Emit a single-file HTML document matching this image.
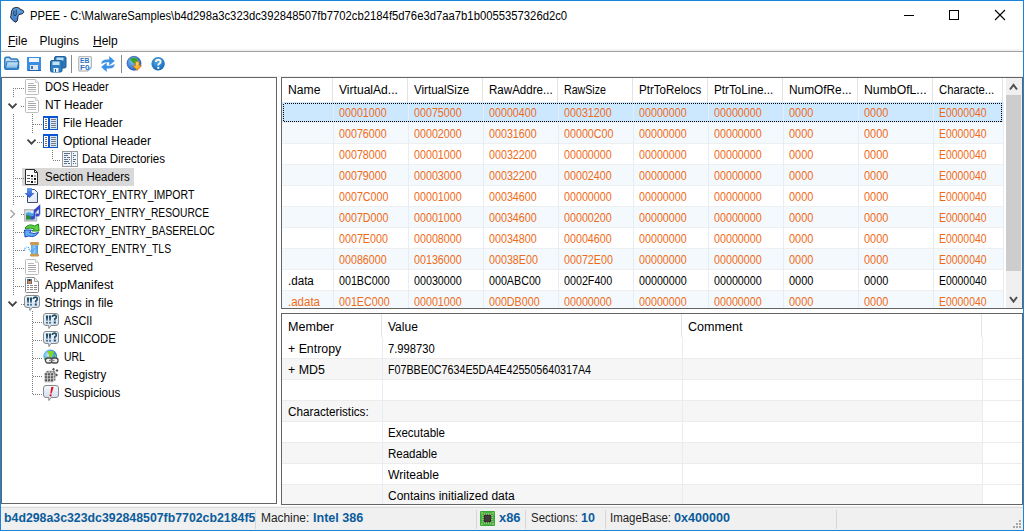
<!DOCTYPE html>
<html><head><meta charset="utf-8">
<style>
*{margin:0;padding:0;box-sizing:border-box}
html,body{width:1024px;height:531px;overflow:hidden;background:#fff}
body{position:relative;font-family:"Liberation Sans",sans-serif;font-size:12px;color:#000}
.a{position:absolute}
.t{position:absolute;white-space:nowrap;line-height:14px;transform-origin:0 0}
#win{position:absolute;left:0;top:0;width:1024px;height:531px;border:1px solid #1884dc;z-index:50}
.box{position:absolute;border:1px solid #646464;background:#fff}
svg{position:absolute;overflow:visible}
</style></head><body>
<div id="win"></div>
<div class="t" style="left:29.70px;top:9px;transform:scaleX(0.9405);">PPEE - C:\MalwareSamples\b4d298a3c323dc392848507fb7702cb2184f5d76e3d7aa7b1b0055357326d2c0</div>
<div class="t" style="left:8px;top:34px;transform-origin:0 0"><u>F</u>ile</div>
<div class="t" style="left:39.60px;top:34px;">Plugins</div>
<div class="t" style="left:93px;top:34px"><u>H</u>elp</div>
<div class="a" style="left:1px;top:49px;width:1022px;height:2px;background:#f3f3f3"></div>
<div class="a" style="left:1px;top:51px;width:1022px;height:1px;background:#a0a0a0"></div>
<div class="a" style="left:1px;top:76px;width:1022px;height:1px;background:#f0f0f0"></div>
<div class="box" style="left:1px;top:77px;width:276px;height:427px"></div>
<div class="box" style="left:281px;top:77px;width:742px;height:232px"></div>
<div class="box" style="left:281px;top:313px;width:742px;height:192px"></div>
<div class="a" style="left:22px;top:168px;width:112px;height:18px;background:#d9d9d9"></div>
<div class="t" style="left:44.50px;top:80px;transform:scaleX(0.9275);">DOS Header</div>
<div class="t" style="left:44.50px;top:98px;transform:scaleX(0.9931);">NT Header</div>
<div class="t" style="left:63.40px;top:116px;transform:scaleX(0.9613);">File Header</div>
<div class="t" style="left:63.40px;top:134px;transform:scaleX(1.0069);">Optional Header</div>
<div class="t" style="left:82.40px;top:152px;transform:scaleX(0.9651);">Data Directories</div>
<div class="t" style="left:44.50px;top:170px;transform:scaleX(0.9551);">Section Headers</div>
<div class="t" style="left:44.50px;top:188px;transform:scaleX(0.8760);">DIRECTORY_ENTRY_IMPORT</div>
<div class="t" style="left:44.50px;top:206px;transform:scaleX(0.8542);">DIRECTORY_ENTRY_RESOURCE</div>
<div class="t" style="left:44.50px;top:224px;transform:scaleX(0.8601);">DIRECTORY_ENTRY_BASERELOC</div>
<div class="t" style="left:44.50px;top:242px;transform:scaleX(0.8630);">DIRECTORY_ENTRY_TLS</div>
<div class="t" style="left:44.50px;top:260px;transform:scaleX(0.9333);">Reserved</div>
<div class="t" style="left:44.50px;top:278px;transform:scaleX(1.0269);">AppManifest</div>
<div class="t" style="left:44.50px;top:296px;">Strings in file</div>
<div class="t" style="left:63.60px;top:314px;transform:scaleX(0.9032);">ASCII</div>
<div class="t" style="left:63.60px;top:332px;transform:scaleX(0.9327);">UNICODE</div>
<div class="t" style="left:63.60px;top:350px;transform:scaleX(0.8667);">URL</div>
<div class="t" style="left:63.60px;top:368px;transform:scaleX(0.9591);">Registry</div>
<div class="t" style="left:63.60px;top:386px;transform:scaleX(0.9724);">Suspicious</div>
<div class="t" style="left:287.50px;top:83px;transform:scaleX(1.0125);">Name</div>
<div class="t" style="left:338.50px;top:83px;transform:scaleX(1.0069);">VirtualAd...</div>
<div class="a" style="left:332px;top:78px;width:1px;height:24px;background:#e3e3e3"></div>
<div class="t" style="left:413.50px;top:83px;transform:scaleX(0.9649);">VirtualSize</div>
<div class="a" style="left:407px;top:78px;width:1px;height:24px;background:#e3e3e3"></div>
<div class="t" style="left:488.50px;top:83px;transform:scaleX(0.9636);">RawAddre...</div>
<div class="a" style="left:482px;top:78px;width:1px;height:24px;background:#e3e3e3"></div>
<div class="t" style="left:563.50px;top:83px;transform:scaleX(0.8854);">RawSize</div>
<div class="a" style="left:557px;top:78px;width:1px;height:24px;background:#e3e3e3"></div>
<div class="t" style="left:638.50px;top:83px;transform:scaleX(0.9631);">PtrToRelocs</div>
<div class="a" style="left:632px;top:78px;width:1px;height:24px;background:#e3e3e3"></div>
<div class="t" style="left:713.50px;top:83px;transform:scaleX(0.9754);">PtrToLine...</div>
<div class="a" style="left:707px;top:78px;width:1px;height:24px;background:#e3e3e3"></div>
<div class="t" style="left:788.50px;top:83px;transform:scaleX(0.9873);">NumOfRe...</div>
<div class="a" style="left:782px;top:78px;width:1px;height:24px;background:#e3e3e3"></div>
<div class="t" style="left:863.50px;top:83px;transform:scaleX(1.0197);">NumbOfL...</div>
<div class="a" style="left:857px;top:78px;width:1px;height:24px;background:#e3e3e3"></div>
<div class="t" style="left:938.50px;top:83px;transform:scaleX(0.9407);">Characte...</div>
<div class="a" style="left:932px;top:78px;width:1px;height:24px;background:#e3e3e3"></div>
<div class="a" style="left:1002px;top:78px;width:1px;height:24px;background:#e3e3e3"></div>
<div class="a" style="left:282px;top:102px;width:723px;height:206px;overflow:hidden">
<div class="a" style="left:0;top:0px;width:721px;height:21px;background:#cce8ff"></div>
<div class="a" style="left:0;top:20px;width:721px;height:1px;background:#edeff1"></div>
<div class="a" style="left:0;top:21px;width:721px;height:21px;background:#f3f9fd"></div>
<div class="a" style="left:0;top:41px;width:721px;height:1px;background:#edeff1"></div>
<div class="a" style="left:0;top:42px;width:721px;height:21px;background:#fff"></div>
<div class="a" style="left:0;top:62px;width:721px;height:1px;background:#edeff1"></div>
<div class="a" style="left:0;top:63px;width:721px;height:21px;background:#f3f9fd"></div>
<div class="a" style="left:0;top:83px;width:721px;height:1px;background:#edeff1"></div>
<div class="a" style="left:0;top:84px;width:721px;height:21px;background:#fff"></div>
<div class="a" style="left:0;top:104px;width:721px;height:1px;background:#edeff1"></div>
<div class="a" style="left:0;top:105px;width:721px;height:21px;background:#f3f9fd"></div>
<div class="a" style="left:0;top:125px;width:721px;height:1px;background:#edeff1"></div>
<div class="a" style="left:0;top:126px;width:721px;height:21px;background:#fff"></div>
<div class="a" style="left:0;top:146px;width:721px;height:1px;background:#edeff1"></div>
<div class="a" style="left:0;top:147px;width:721px;height:21px;background:#f3f9fd"></div>
<div class="a" style="left:0;top:167px;width:721px;height:1px;background:#edeff1"></div>
<div class="a" style="left:0;top:168px;width:721px;height:21px;background:#fff"></div>
<div class="a" style="left:0;top:188px;width:721px;height:1px;background:#edeff1"></div>
<div class="a" style="left:0;top:189px;width:721px;height:21px;background:#f3f9fd"></div>
<div class="a" style="left:0;top:209px;width:721px;height:1px;background:#edeff1"></div>
<div class="a" style="left:51px;top:0;width:1px;height:206px;background:#e6edf5"></div>
<div class="a" style="left:126px;top:0;width:1px;height:206px;background:#e6edf5"></div>
<div class="a" style="left:201px;top:0;width:1px;height:206px;background:#e6edf5"></div>
<div class="a" style="left:276px;top:0;width:1px;height:206px;background:#e6edf5"></div>
<div class="a" style="left:351px;top:0;width:1px;height:206px;background:#e6edf5"></div>
<div class="a" style="left:426px;top:0;width:1px;height:206px;background:#e6edf5"></div>
<div class="a" style="left:501px;top:0;width:1px;height:206px;background:#e6edf5"></div>
<div class="a" style="left:576px;top:0;width:1px;height:206px;background:#e6edf5"></div>
<div class="a" style="left:651px;top:0;width:1px;height:206px;background:#e6edf5"></div>
<div class="a" style="left:721px;top:0;width:1px;height:206px;background:#e6edf5"></div>
</div>
<div class="t" style="left:338.50px;top:106px;transform:scaleX(0.8935);color:#f06a16;">00001000</div>
<div class="t" style="left:413.50px;top:106px;transform:scaleX(0.8935);color:#f06a16;">00075000</div>
<div class="t" style="left:488.50px;top:106px;transform:scaleX(0.8935);color:#f06a16;">00000400</div>
<div class="t" style="left:563.50px;top:106px;transform:scaleX(0.8935);color:#f06a16;">00031200</div>
<div class="t" style="left:638.50px;top:106px;transform:scaleX(0.8935);color:#f06a16;">00000000</div>
<div class="t" style="left:713.50px;top:106px;transform:scaleX(0.8935);color:#f06a16;">00000000</div>
<div class="t" style="left:788.50px;top:106px;transform:scaleX(0.9120);color:#f06a16;">0000</div>
<div class="t" style="left:863.50px;top:106px;transform:scaleX(0.9120);color:#f06a16;">0000</div>
<div class="t" style="left:938.50px;top:106px;transform:scaleX(0.8682);color:#f06a16;">E0000040</div>
<div class="t" style="left:338.50px;top:127px;transform:scaleX(0.8935);color:#f06a16;">00076000</div>
<div class="t" style="left:413.50px;top:127px;transform:scaleX(0.8935);color:#f06a16;">00002000</div>
<div class="t" style="left:488.50px;top:127px;transform:scaleX(0.8935);color:#f06a16;">00031600</div>
<div class="t" style="left:563.50px;top:127px;transform:scaleX(0.8929);color:#f06a16;">00000C00</div>
<div class="t" style="left:638.50px;top:127px;transform:scaleX(0.8935);color:#f06a16;">00000000</div>
<div class="t" style="left:713.50px;top:127px;transform:scaleX(0.8935);color:#f06a16;">00000000</div>
<div class="t" style="left:788.50px;top:127px;transform:scaleX(0.9120);color:#f06a16;">0000</div>
<div class="t" style="left:863.50px;top:127px;transform:scaleX(0.9120);color:#f06a16;">0000</div>
<div class="t" style="left:938.50px;top:127px;transform:scaleX(0.8682);color:#f06a16;">E0000040</div>
<div class="t" style="left:338.50px;top:148px;transform:scaleX(0.8935);color:#f06a16;">00078000</div>
<div class="t" style="left:413.50px;top:148px;transform:scaleX(0.8935);color:#f06a16;">00001000</div>
<div class="t" style="left:488.50px;top:148px;transform:scaleX(0.8935);color:#f06a16;">00032200</div>
<div class="t" style="left:563.50px;top:148px;transform:scaleX(0.8935);color:#f06a16;">00000000</div>
<div class="t" style="left:638.50px;top:148px;transform:scaleX(0.8935);color:#f06a16;">00000000</div>
<div class="t" style="left:713.50px;top:148px;transform:scaleX(0.8935);color:#f06a16;">00000000</div>
<div class="t" style="left:788.50px;top:148px;transform:scaleX(0.9120);color:#f06a16;">0000</div>
<div class="t" style="left:863.50px;top:148px;transform:scaleX(0.9120);color:#f06a16;">0000</div>
<div class="t" style="left:938.50px;top:148px;transform:scaleX(0.8682);color:#f06a16;">E0000040</div>
<div class="t" style="left:338.50px;top:169px;transform:scaleX(0.8935);color:#f06a16;">00079000</div>
<div class="t" style="left:413.50px;top:169px;transform:scaleX(0.8935);color:#f06a16;">00003000</div>
<div class="t" style="left:488.50px;top:169px;transform:scaleX(0.8935);color:#f06a16;">00032200</div>
<div class="t" style="left:563.50px;top:169px;transform:scaleX(0.8935);color:#f06a16;">00002400</div>
<div class="t" style="left:638.50px;top:169px;transform:scaleX(0.8935);color:#f06a16;">00000000</div>
<div class="t" style="left:713.50px;top:169px;transform:scaleX(0.8935);color:#f06a16;">00000000</div>
<div class="t" style="left:788.50px;top:169px;transform:scaleX(0.9120);color:#f06a16;">0000</div>
<div class="t" style="left:863.50px;top:169px;transform:scaleX(0.9120);color:#f06a16;">0000</div>
<div class="t" style="left:938.50px;top:169px;transform:scaleX(0.8682);color:#f06a16;">E0000040</div>
<div class="t" style="left:338.50px;top:190px;transform:scaleX(0.8929);color:#f06a16;">0007C000</div>
<div class="t" style="left:413.50px;top:190px;transform:scaleX(0.8935);color:#f06a16;">00001000</div>
<div class="t" style="left:488.50px;top:190px;transform:scaleX(0.8935);color:#f06a16;">00034600</div>
<div class="t" style="left:563.50px;top:190px;transform:scaleX(0.8935);color:#f06a16;">00000000</div>
<div class="t" style="left:638.50px;top:190px;transform:scaleX(0.8935);color:#f06a16;">00000000</div>
<div class="t" style="left:713.50px;top:190px;transform:scaleX(0.8935);color:#f06a16;">00000000</div>
<div class="t" style="left:788.50px;top:190px;transform:scaleX(0.9120);color:#f06a16;">0000</div>
<div class="t" style="left:863.50px;top:190px;transform:scaleX(0.9120);color:#f06a16;">0000</div>
<div class="t" style="left:938.50px;top:190px;transform:scaleX(0.8682);color:#f06a16;">E0000040</div>
<div class="t" style="left:338.50px;top:211px;transform:scaleX(0.8929);color:#f06a16;">0007D000</div>
<div class="t" style="left:413.50px;top:211px;transform:scaleX(0.8935);color:#f06a16;">00001000</div>
<div class="t" style="left:488.50px;top:211px;transform:scaleX(0.8935);color:#f06a16;">00034600</div>
<div class="t" style="left:563.50px;top:211px;transform:scaleX(0.8935);color:#f06a16;">00000200</div>
<div class="t" style="left:638.50px;top:211px;transform:scaleX(0.8935);color:#f06a16;">00000000</div>
<div class="t" style="left:713.50px;top:211px;transform:scaleX(0.8935);color:#f06a16;">00000000</div>
<div class="t" style="left:788.50px;top:211px;transform:scaleX(0.9120);color:#f06a16;">0000</div>
<div class="t" style="left:863.50px;top:211px;transform:scaleX(0.9120);color:#f06a16;">0000</div>
<div class="t" style="left:938.50px;top:211px;transform:scaleX(0.8682);color:#f06a16;">E0000040</div>
<div class="t" style="left:338.50px;top:232px;transform:scaleX(0.8932);color:#f06a16;">0007E000</div>
<div class="t" style="left:413.50px;top:232px;transform:scaleX(0.8935);color:#f06a16;">00008000</div>
<div class="t" style="left:488.50px;top:232px;transform:scaleX(0.8935);color:#f06a16;">00034800</div>
<div class="t" style="left:563.50px;top:232px;transform:scaleX(0.8935);color:#f06a16;">00004600</div>
<div class="t" style="left:638.50px;top:232px;transform:scaleX(0.8935);color:#f06a16;">00000000</div>
<div class="t" style="left:713.50px;top:232px;transform:scaleX(0.8935);color:#f06a16;">00000000</div>
<div class="t" style="left:788.50px;top:232px;transform:scaleX(0.9120);color:#f06a16;">0000</div>
<div class="t" style="left:863.50px;top:232px;transform:scaleX(0.9120);color:#f06a16;">0000</div>
<div class="t" style="left:938.50px;top:232px;transform:scaleX(0.8682);color:#f06a16;">E0000040</div>
<div class="t" style="left:338.50px;top:253px;transform:scaleX(0.8935);color:#f06a16;">00086000</div>
<div class="t" style="left:413.50px;top:253px;transform:scaleX(0.8935);color:#f06a16;">00136000</div>
<div class="t" style="left:488.50px;top:253px;transform:scaleX(0.8932);color:#f06a16;">00038E00</div>
<div class="t" style="left:563.50px;top:253px;transform:scaleX(0.8932);color:#f06a16;">00072E00</div>
<div class="t" style="left:638.50px;top:253px;transform:scaleX(0.8935);color:#f06a16;">00000000</div>
<div class="t" style="left:713.50px;top:253px;transform:scaleX(0.8935);color:#f06a16;">00000000</div>
<div class="t" style="left:788.50px;top:253px;transform:scaleX(0.9120);color:#f06a16;">0000</div>
<div class="t" style="left:863.50px;top:253px;transform:scaleX(0.9120);color:#f06a16;">0000</div>
<div class="t" style="left:938.50px;top:253px;transform:scaleX(0.8682);color:#f06a16;">E0000040</div>
<div class="t" style="left:287.50px;top:274px;transform:scaleX(0.9670);color:#000;">.data</div>
<div class="t" style="left:338.50px;top:274px;transform:scaleX(0.8925);color:#000;">001BC000</div>
<div class="t" style="left:413.50px;top:274px;transform:scaleX(0.8935);color:#000;">00030000</div>
<div class="t" style="left:488.50px;top:274px;transform:scaleX(0.8922);color:#000;">000ABC00</div>
<div class="t" style="left:563.50px;top:274px;transform:scaleX(0.8935);color:#000;">0002F400</div>
<div class="t" style="left:638.50px;top:274px;transform:scaleX(0.8935);color:#000;">00000000</div>
<div class="t" style="left:713.50px;top:274px;transform:scaleX(0.8935);color:#000;">00000000</div>
<div class="t" style="left:788.50px;top:274px;transform:scaleX(0.9120);color:#000;">0000</div>
<div class="t" style="left:863.50px;top:274px;transform:scaleX(0.9120);color:#000;">0000</div>
<div class="t" style="left:938.50px;top:274px;transform:scaleX(0.8682);color:#000;">E0000040</div>
<div class="t" style="left:287.50px;top:295px;transform:scaleX(0.9594);color:#f06a16;">.adata</div>
<div class="t" style="left:338.50px;top:295px;transform:scaleX(0.8925);color:#f06a16;">001EC000</div>
<div class="t" style="left:413.50px;top:295px;transform:scaleX(0.8935);color:#f06a16;">00001000</div>
<div class="t" style="left:488.50px;top:295px;transform:scaleX(0.8925);color:#f06a16;">000DB000</div>
<div class="t" style="left:563.50px;top:295px;transform:scaleX(0.8935);color:#f06a16;">00000000</div>
<div class="t" style="left:638.50px;top:295px;transform:scaleX(0.8935);color:#f06a16;">00000000</div>
<div class="t" style="left:713.50px;top:295px;transform:scaleX(0.8935);color:#f06a16;">00000000</div>
<div class="t" style="left:788.50px;top:295px;transform:scaleX(0.9120);color:#f06a16;">0000</div>
<div class="t" style="left:863.50px;top:295px;transform:scaleX(0.9120);color:#f06a16;">0000</div>
<div class="t" style="left:938.50px;top:295px;transform:scaleX(0.8682);color:#f06a16;">E0000040</div>
<div class="a" style="left:282px;top:314px;width:740px;height:190px;overflow:hidden">
<div class="a" style="left:0;top:23px;width:700px;height:21px;background:#fff"></div>
<div class="a" style="left:0;top:44px;width:700px;height:21px;background:#f6f6f6"></div>
<div class="a" style="left:0;top:44px;width:740px;height:1px;background:#ececec"></div>
<div class="a" style="left:0;top:65px;width:700px;height:21px;background:#fff"></div>
<div class="a" style="left:0;top:65px;width:740px;height:1px;background:#ececec"></div>
<div class="a" style="left:0;top:86px;width:700px;height:21px;background:#f6f6f6"></div>
<div class="a" style="left:0;top:86px;width:740px;height:1px;background:#ececec"></div>
<div class="a" style="left:0;top:107px;width:700px;height:21px;background:#fff"></div>
<div class="a" style="left:0;top:107px;width:740px;height:1px;background:#ececec"></div>
<div class="a" style="left:0;top:128px;width:700px;height:21px;background:#f6f6f6"></div>
<div class="a" style="left:0;top:128px;width:740px;height:1px;background:#ececec"></div>
<div class="a" style="left:0;top:149px;width:700px;height:21px;background:#fff"></div>
<div class="a" style="left:0;top:149px;width:740px;height:1px;background:#ececec"></div>
<div class="a" style="left:0;top:170px;width:700px;height:21px;background:#f6f6f6"></div>
<div class="a" style="left:0;top:170px;width:740px;height:1px;background:#ececec"></div>
<div class="a" style="left:0;top:191px;width:700px;height:21px;background:#fff"></div>
<div class="a" style="left:0;top:191px;width:740px;height:1px;background:#ececec"></div>
<div class="a" style="left:99px;top:0;width:1px;height:23px;background:#e3e3e3"></div>
<div class="a" style="left:100px;top:23px;width:1px;height:170px;background:#e6edf5"></div>
<div class="a" style="left:399px;top:0;width:1px;height:23px;background:#e3e3e3"></div>
<div class="a" style="left:400px;top:23px;width:1px;height:170px;background:#e6edf5"></div>
<div class="a" style="left:699px;top:0;width:1px;height:23px;background:#e3e3e3"></div>
<div class="a" style="left:700px;top:23px;width:1px;height:170px;background:#e6edf5"></div>
</div>
<div class="t" style="left:287.50px;top:320px;transform:scaleX(1.0455);">Member</div>
<div class="t" style="left:388.00px;top:320px;">Value</div>
<div class="t" style="left:688.00px;top:320px;transform:scaleX(1.0472);">Comment</div>
<div class="t" style="left:288.00px;top:342px;transform:scaleX(1.0288);">+ Entropy</div>
<div class="t" style="left:388.00px;top:342px;transform:scaleX(0.9340);">7.998730</div>
<div class="t" style="left:288.00px;top:363px;transform:scaleX(1.0361);">+ MD5</div>
<div class="t" style="left:388.00px;top:363px;transform:scaleX(0.8925);">F07BBE0C7634E5DA4E425505640317A4</div>
<div class="t" style="left:288.00px;top:405px;transform:scaleX(0.9759);">Characteristics:</div>
<div class="t" style="left:388.00px;top:426px;transform:scaleX(0.9600);">Executable</div>
<div class="t" style="left:388.00px;top:447px;transform:scaleX(0.9577);">Readable</div>
<div class="t" style="left:388.00px;top:468px;transform:scaleX(1.0078);">Writeable</div>
<div class="t" style="left:388.00px;top:489px;">Contains initialized data</div>
<div class="a" style="left:1px;top:506px;width:1022px;height:1px;background:#f4f4f4"></div>
<div class="a" style="left:1px;top:507px;width:1022px;height:23px;background:#f0f0f0;border-top:1px solid #dcdcdc"></div>
<div class="t" style="left:4.20px;top:511px;transform:scaleX(1.0265);color:#0b5c9c;font-weight:bold;">b4d298a3c323dc392848507fb7702cb2184f5</div>
<div class="t" style="left:260.70px;top:511px;transform:scaleX(0.9918);color:#1e1e1e;">Machine:</div>
<div class="t" style="left:312.70px;top:511px;transform:scaleX(1.0479);color:#0b5c9c;font-weight:bold;">Intel 386</div>
<div class="t" style="left:498.50px;top:511px;transform:scaleX(1.0750);color:#0b5c9c;font-weight:bold;">x86</div>
<div class="t" style="left:530.50px;top:511px;transform:scaleX(0.9531);color:#1e1e1e;">Sections:</div>
<div class="t" style="left:581.10px;top:511px;transform:scaleX(1.0357);color:#0b5c9c;font-weight:bold;">10</div>
<div class="t" style="left:610.40px;top:511px;transform:scaleX(0.9531);color:#1e1e1e;">ImageBase:</div>
<div class="t" style="left:674.00px;top:511px;transform:scaleX(1.0463);color:#0b5c9c;font-weight:bold;">0x400000</div>
<div class="a" style="left:255px;top:510px;width:1px;height:19px;background:#d7d7d7"></div>
<div class="a" style="left:476px;top:510px;width:1px;height:19px;background:#d7d7d7"></div>
<div class="a" style="left:525px;top:510px;width:1px;height:19px;background:#d7d7d7"></div>
<div class="a" style="left:605px;top:510px;width:1px;height:19px;background:#d7d7d7"></div>
<div class="a" style="left:836px;top:510px;width:1px;height:19px;background:#d7d7d7"></div>
<svg width="1024" height="531" style="left:0;top:0;z-index:10"><g>
<defs><linearGradient id="dg" x1="0" y1="0" x2="0" y2="1"><stop offset="0" stop-color="#6aa4e4"/><stop offset="1" stop-color="#3a78c8"/></linearGradient></defs>
<path d="M13 8.3 Q16 6.8 19.3 8 Q20 8.7 20.2 9.5 L22.5 10 Q24 11 23.6 12.5 Q23 13.8 21.5 14 L18.8 14.6 Q17.8 15.5 17.8 18 Q17.8 21 15.8 22.3 Q12.5 21 10.5 17.5 Q10.2 16.5 11 15.5 Q11 10.5 13 8.3 Z" fill="url(#dg)" stroke="#101820" stroke-width="0.9"/>
<path d="M13.8 10.5 V14.5 Q14 15.8 15.3 15.6 Q16.2 15.4 16.2 14.5 V9.5" fill="none" stroke="#15202e" stroke-width="0.8"/>
</g><rect x="904" y="15" width="10" height="1" fill="#000" shape-rendering="crispEdges"/><rect x="949.5" y="10.5" width="9" height="9" fill="none" stroke="#000"/><path d="M995 10 L1005 20 M1005 10 L995 20" stroke="#000" stroke-width="1.1"/><g transform="translate(4,56.5)">
<defs><linearGradient id="fg" x1="0" y1="0" x2="0" y2="1"><stop offset="0" stop-color="#cfe6f8"/><stop offset="1" stop-color="#83bde8"/></linearGradient></defs>
<path d="M0.8 2.5 Q0.8 0.8 2.5 0.8 H5.5 L7 2.5 H12.5 Q13.5 2.5 13.8 4 L14.5 5 V11.5 Q14.5 12.7 13 12.7 H2 Q0.8 12.7 0.8 11.5 Z" fill="#bcdaf2" stroke="#2c78bd" stroke-width="1.5"/>
<path d="M3 5.2 H13.5 Q14.8 5.2 14.5 6.5 L13.3 11.7 H1.5 Z" fill="url(#fg)" stroke="#2c78bd" stroke-width="1.1"/>
</g><g transform="translate(27,57)" shape-rendering="crispEdges">
<rect x="0" y="0" width="14" height="14" fill="#3b8ee3"/>
<rect x="1" y="13" width="13" height="1" fill="#1f60b8"/>
<rect x="2" y="1" width="10" height="4" fill="#f2f7fd"/>
<rect x="3" y="8" width="8" height="5" fill="#e6e6e6"/>
<rect x="4" y="9" width="2" height="3" fill="#2a7ad8"/>
</g><g transform="translate(50,56)">
<rect x="4.5" y="0.5" width="11.5" height="11.5" rx="1.5" fill="#2c77b8" stroke="#1d5e98"/>
<rect x="6.5" y="1.5" width="7" height="3" fill="#b9dcf3"/>
<rect x="0.5" y="4.5" width="11.5" height="11.5" rx="1.5" fill="#2f7fc2" stroke="#1d5e98"/>
<rect x="2.5" y="5.5" width="7" height="3.5" fill="#c6e2f6"/>
<rect x="3.5" y="12" width="5" height="4" fill="#e8f2fa"/>
<rect x="5" y="13" width="1" height="3" fill="#1d5e98"/>
</g><rect x="71" y="55" width="1" height="18" fill="#8a8a8a" shape-rendering="crispEdges"/><g transform="translate(78,56)">
<path d="M1 0.8 H12.5 Q13.3 0.8 13.3 1.6 V11 L9.5 15 H1.6 Q0.8 15 0.8 14.2 V1.6 Q0.8 0.8 1.6 0.8 Z" fill="#fff" stroke="#a8a8a8" stroke-width="1.1"/>
<path d="M13 11.5 L10 14.5" stroke="#7ab8ea" stroke-width="1.2"/>
<text x="2" y="7.3" font-family="Liberation Sans" font-weight="bold" font-size="7.6" fill="#2d74c0" textLength="9.5" lengthAdjust="spacingAndGlyphs">EB</text>
<text x="2" y="13.6" font-family="Liberation Sans" font-weight="bold" font-size="7.6" fill="#2d74c0" textLength="9.5" lengthAdjust="spacingAndGlyphs">F0</text>
</g><g transform="translate(100.7,56)" fill="#3b91e5">
<path d="M0.5 8 Q1 3.5 6 3.5 H8.5 V0 L14 5 L8.5 9.5 V6.3 H6 Q3 6.3 0.5 8 Z"/>
<path d="M14 8 Q13.5 12.5 8.5 12.5 H6 V16 L0.5 11 L6 6.5 V9.7 H8.5 Q11.5 9.7 14 8 Z"/>
</g><rect x="121" y="55" width="1" height="18" fill="#8a8a8a" shape-rendering="crispEdges"/><g transform="translate(127,56.3)">
<defs><radialGradient id="gg" cx="0.4" cy="0.35" r="0.75"><stop offset="0" stop-color="#7cc7f5"/><stop offset="1" stop-color="#1d56b8"/></radialGradient>
<linearGradient id="ga" x1="0" y1="0" x2="0" y2="1"><stop offset="0" stop-color="#ffe24a"/><stop offset="1" stop-color="#f59a10"/></linearGradient></defs>
<circle cx="7" cy="7" r="7" fill="url(#gg)" stroke="#2a3fa0" stroke-width="0.6"/>
<path d="M3 2.5 Q7 0.5 10.5 2.5 Q11.5 5 9 6.5 Q7 8 5.5 6 Q4 4.5 3 2.5 Z" fill="#3aa52a"/>
<path d="M8.5 5.5 H12 V9.5 H14.5 L10.2 14 L6 9.5 H8.5 Z" fill="url(#ga)" stroke="#d8761a" stroke-width="0.8"/>
</g><g transform="translate(151.3,57)">
<defs><radialGradient id="hg" cx="0.45" cy="0.35" r="0.7"><stop offset="0" stop-color="#4fb0ee"/><stop offset="1" stop-color="#0e5fae"/></radialGradient></defs>
<circle cx="6.8" cy="6.8" r="6.7" fill="url(#hg)"/>
<path d="M4.6 5.1 Q4.6 2.8 7 2.8 Q9.3 2.8 9.3 4.8 Q9.3 6.2 7.6 7 Q7 7.4 7 8.6" fill="none" stroke="#fff6e8" stroke-width="1.9"/>
<circle cx="7" cy="10.9" r="1.15" fill="#fff6e8"/>
</g><line x1="13.5" y1="88" x2="13.5" y2="97" stroke="#7a7a7a" stroke-dasharray="1 1" shape-rendering="crispEdges"/><line x1="13.5" y1="114" x2="13.5" y2="205" stroke="#7a7a7a" stroke-dasharray="1 1" shape-rendering="crispEdges"/><line x1="13.5" y1="222" x2="13.5" y2="295" stroke="#7a7a7a" stroke-dasharray="1 1" shape-rendering="crispEdges"/><line x1="13" y1="88.5" x2="24" y2="88.5" stroke="#7a7a7a" stroke-dasharray="1 1" shape-rendering="crispEdges"/><line x1="21" y1="106.5" x2="24" y2="106.5" stroke="#7a7a7a" stroke-dasharray="1 1" shape-rendering="crispEdges"/><line x1="32.5" y1="114" x2="32.5" y2="134" stroke="#7a7a7a" stroke-dasharray="1 1" shape-rendering="crispEdges"/><line x1="33" y1="124.5" x2="42" y2="124.5" stroke="#7a7a7a" stroke-dasharray="1 1" shape-rendering="crispEdges"/><line x1="37" y1="142.5" x2="42" y2="142.5" stroke="#7a7a7a" stroke-dasharray="1 1" shape-rendering="crispEdges"/><line x1="52.5" y1="150" x2="52.5" y2="160" stroke="#7a7a7a" stroke-dasharray="1 1" shape-rendering="crispEdges"/><line x1="53" y1="160.5" x2="61" y2="160.5" stroke="#7a7a7a" stroke-dasharray="1 1" shape-rendering="crispEdges"/><line x1="13" y1="178.5" x2="24" y2="178.5" stroke="#7a7a7a" stroke-dasharray="1 1" shape-rendering="crispEdges"/><line x1="13" y1="196.5" x2="24" y2="196.5" stroke="#7a7a7a" stroke-dasharray="1 1" shape-rendering="crispEdges"/><line x1="13" y1="232.5" x2="24" y2="232.5" stroke="#7a7a7a" stroke-dasharray="1 1" shape-rendering="crispEdges"/><line x1="13" y1="250.5" x2="24" y2="250.5" stroke="#7a7a7a" stroke-dasharray="1 1" shape-rendering="crispEdges"/><line x1="13" y1="268.5" x2="24" y2="268.5" stroke="#7a7a7a" stroke-dasharray="1 1" shape-rendering="crispEdges"/><line x1="13" y1="286.5" x2="24" y2="286.5" stroke="#7a7a7a" stroke-dasharray="1 1" shape-rendering="crispEdges"/><line x1="21" y1="214.5" x2="24" y2="214.5" stroke="#7a7a7a" stroke-dasharray="1 1" shape-rendering="crispEdges"/><line x1="21" y1="304.5" x2="24" y2="304.5" stroke="#7a7a7a" stroke-dasharray="1 1" shape-rendering="crispEdges"/><line x1="32.5" y1="311" x2="32.5" y2="394" stroke="#7a7a7a" stroke-dasharray="1 1" shape-rendering="crispEdges"/><line x1="33" y1="322.5" x2="42" y2="322.5" stroke="#7a7a7a" stroke-dasharray="1 1" shape-rendering="crispEdges"/><line x1="33" y1="340.5" x2="42" y2="340.5" stroke="#7a7a7a" stroke-dasharray="1 1" shape-rendering="crispEdges"/><line x1="33" y1="358.5" x2="42" y2="358.5" stroke="#7a7a7a" stroke-dasharray="1 1" shape-rendering="crispEdges"/><line x1="33" y1="376.5" x2="42" y2="376.5" stroke="#7a7a7a" stroke-dasharray="1 1" shape-rendering="crispEdges"/><line x1="33" y1="394.5" x2="42" y2="394.5" stroke="#7a7a7a" stroke-dasharray="1 1" shape-rendering="crispEdges"/><path d="M8.5 103.7 L12.5 107.7 L16.5 103.7" fill="none" stroke="#424242" stroke-width="1.8"/><path d="M27.5 139.7 L31.5 143.7 L35.5 139.7" fill="none" stroke="#424242" stroke-width="1.8"/><path d="M8.5 301.7 L12.5 305.7 L16.5 301.7" fill="none" stroke="#424242" stroke-width="1.8"/><path d="M10.5 210 L14.5 214 L10.5 218" fill="none" stroke="#a8a8a8" stroke-width="1.5"/><g transform="translate(25,79)">
<path d="M0.5 1.5 Q0.5 0.5 1.5 0.5 H10.5 L13.5 3.5 V14.5 Q13.5 15.5 12.5 15.5 H1.5 Q0.5 15.5 0.5 14.5 Z" fill="#fff" stroke="#bdbdbd"/>
<path d="M10.5 0.5 V3.5 H13.5" fill="#f4f4f4" stroke="#d0d0d0"/>
<g fill="#a6a6a6" shape-rendering="crispEdges"><rect x="3" y="4" width="6" height="1" fill="#b8b8b8"/><rect x="3" y="6" width="8" height="1"/><rect x="3" y="8" width="8" height="1"/><rect x="3" y="10" width="8" height="1" fill="#b0b0b0"/><rect x="3" y="12" width="8" height="1" fill="#c0c0c0"/></g>
</g><g transform="translate(25,97)">
<path d="M0.5 1.5 Q0.5 0.5 1.5 0.5 H10.5 L13.5 3.5 V14.5 Q13.5 15.5 12.5 15.5 H1.5 Q0.5 15.5 0.5 14.5 Z" fill="#fff" stroke="#bdbdbd"/>
<path d="M10.5 0.5 V3.5 H13.5" fill="#f4f4f4" stroke="#d0d0d0"/>
<g fill="#a6a6a6" shape-rendering="crispEdges"><rect x="3" y="4" width="6" height="1" fill="#b8b8b8"/><rect x="3" y="6" width="8" height="1"/><rect x="3" y="8" width="8" height="1"/><rect x="3" y="10" width="8" height="1" fill="#b0b0b0"/><rect x="3" y="12" width="8" height="1" fill="#c0c0c0"/></g>
</g><g transform="translate(25,259)">
<path d="M0.5 1.5 Q0.5 0.5 1.5 0.5 H10.5 L13.5 3.5 V14.5 Q13.5 15.5 12.5 15.5 H1.5 Q0.5 15.5 0.5 14.5 Z" fill="#fff" stroke="#bdbdbd"/>
<path d="M10.5 0.5 V3.5 H13.5" fill="#f4f4f4" stroke="#d0d0d0"/>
<g fill="#a6a6a6" shape-rendering="crispEdges"><rect x="3" y="4" width="6" height="1" fill="#b8b8b8"/><rect x="3" y="6" width="8" height="1"/><rect x="3" y="8" width="8" height="1"/><rect x="3" y="10" width="8" height="1" fill="#b0b0b0"/><rect x="3" y="12" width="8" height="1" fill="#c0c0c0"/></g>
</g><g transform="translate(43,116)" shape-rendering="crispEdges"><rect x="0" y="0" width="15" height="14" fill="#0b55d4"/><rect x="1" y="2" width="4" height="11" fill="#fff"/><rect x="7" y="2" width="7" height="11" fill="#d6e8fb"/><rect x="2" y="3" width="2" height="1" fill="#707070"/><rect x="8" y="3" width="5" height="1" fill="#7a7a7a"/><rect x="2" y="5" width="2" height="1" fill="#707070"/><rect x="8" y="5" width="5" height="1" fill="#7a7a7a"/><rect x="2" y="7" width="2" height="1" fill="#707070"/><rect x="8" y="7" width="5" height="1" fill="#7a7a7a"/><rect x="2" y="9" width="2" height="1" fill="#707070"/><rect x="8" y="9" width="5" height="1" fill="#7a7a7a"/><rect x="2" y="11" width="2" height="1" fill="#707070"/><rect x="8" y="11" width="5" height="1" fill="#7a7a7a"/></g><g transform="translate(43,134)" shape-rendering="crispEdges"><rect x="0" y="0" width="15" height="14" fill="#0b55d4"/><rect x="1" y="2" width="4" height="11" fill="#fff"/><rect x="7" y="2" width="7" height="11" fill="#d6e8fb"/><rect x="2" y="3" width="2" height="1" fill="#707070"/><rect x="8" y="3" width="5" height="1" fill="#7a7a7a"/><rect x="2" y="5" width="2" height="1" fill="#707070"/><rect x="8" y="5" width="5" height="1" fill="#7a7a7a"/><rect x="2" y="7" width="2" height="1" fill="#707070"/><rect x="8" y="7" width="5" height="1" fill="#7a7a7a"/><rect x="2" y="9" width="2" height="1" fill="#707070"/><rect x="8" y="9" width="5" height="1" fill="#7a7a7a"/><rect x="2" y="11" width="2" height="1" fill="#707070"/><rect x="8" y="11" width="5" height="1" fill="#7a7a7a"/></g><g transform="translate(62,151)" shape-rendering="crispEdges"><rect x="0" y="0" width="16" height="16" fill="#9a9a9a"/><rect x="1" y="1" width="8" height="14" fill="#eef5fd"/><rect x="10" y="1" width="5" height="14" fill="#eef5fd"/><rect x="2" y="2" width="6" height="1" fill="#5b6f88"/><rect x="2" y="4" width="4" height="1" fill="#5b6f88"/><rect x="2" y="6" width="2" height="1" fill="#5b6f88"/><rect x="5" y="6" width="3" height="1" fill="#5b6f88"/><rect x="2" y="8" width="4" height="1" fill="#5b6f88"/><rect x="7" y="8" width="1" height="1" fill="#5b6f88"/><rect x="2" y="10" width="5" height="1" fill="#5b6f88"/><rect x="2" y="12" width="3" height="1" fill="#5b6f88"/><rect x="6" y="12" width="2" height="1" fill="#5b6f88"/><rect x="11" y="2" width="1" height="1" fill="#5b6f88"/><rect x="11" y="4" width="3" height="1" fill="#5b6f88"/><rect x="11" y="6" width="1" height="1" fill="#5b6f88"/><rect x="11" y="8" width="3" height="1" fill="#5b6f88"/><rect x="11" y="10" width="2" height="1" fill="#5b6f88"/><rect x="11" y="12" width="1" height="1" fill="#5b6f88"/><rect x="13" y="12" width="1" height="1" fill="#5b6f88"/></g><g transform="translate(25,169)"><path d="M0.5 0.5 H9.5 L12.5 3.5 V15.5 H0.5 Z" fill="#fff" stroke="#2a2a2a"/><path d="M9.5 0.5 V3.5 H12.5" fill="none" stroke="#2a2a2a"/><g shape-rendering="crispEdges"><rect x="2" y="6" width="3" height="1" fill="#555"/><rect x="6" y="5.5" width="2" height="2" fill="#111"/><rect x="9" y="5.5" width="2" height="2" fill="#aaa"/><rect x="2" y="9" width="3" height="1" fill="#555"/><rect x="6" y="8.5" width="2" height="2" fill="#aaa"/><rect x="9" y="8.5" width="2" height="2" fill="#111"/><rect x="2" y="12" width="3" height="1" fill="#555"/><rect x="6" y="11.5" width="2" height="2" fill="#111"/><rect x="9" y="11.5" width="2" height="2" fill="#aaa"/></g></g><g transform="translate(25,188)">
<defs><linearGradient id="ig" x1="0" y1="0" x2="1" y2="1"><stop offset="0" stop-color="#fff"/><stop offset="1" stop-color="#dfe3f4"/></linearGradient>
<linearGradient id="ia" x1="0" y1="0" x2="0" y2="1"><stop offset="0" stop-color="#6a9cf0"/><stop offset="1" stop-color="#1f52c8"/></linearGradient></defs>
<path d="M2.5 1.5 H9.5 L12.5 4.5 V14.5 H2.5 Z" fill="url(#ig)" stroke="#3c4d6e"/>
<path d="M2 0 H7 V5 H9.5 L4.5 10 L-0.5 5 H2 Z" fill="url(#ia)"/>
</g><g transform="translate(24,205)">
<rect x="0.8" y="4.8" width="11.6" height="11" fill="#fff" stroke="#b8b8b8" stroke-width="1.6"/>
<rect x="2" y="6" width="9.2" height="8.6" fill="#4e9ee6"/>
<path d="M2 8 Q5 6.5 8 8.5 L11.2 7.5 V6 H2 Z" fill="#cdeafc"/>
<path d="M2 10.5 Q5 9 8.5 13 V14.6 H2 Z" fill="#2f8a3a"/>
<path d="M10.5 12 V5.5 L15.5 1 V9.5" fill="none" stroke="#3546c8" stroke-width="1.5"/>
<path d="M10.5 6.5 L15.5 2" fill="none" stroke="#3546c8" stroke-width="2.4"/>
<ellipse cx="8.6" cy="12.8" rx="2.2" ry="1.7" fill="#3546c8"/>
<ellipse cx="13.6" cy="10" rx="2.1" ry="1.6" fill="#3546c8"/>
</g><g transform="translate(24,223.5)">
<path d="M1 4.5 Q5 -0.5 10.5 2.5 L14.5 0.5 L15 7.5 L8 7.5 L10.5 5.5 Q6 3.5 2 5.5 Z" fill="#5fd040" stroke="#1f8a1a" stroke-width="1"/>
<path d="M0.5 6.5 H7.5 L5.5 9 Q10 11 14.5 9 Q11 14.5 4.5 12.5 L1 13.5 Z" fill="#62aef0" stroke="#1a48c8" stroke-width="1"/>
</g><g transform="translate(24,241.5)">
<defs><linearGradient id="tg" x1="0" y1="0" x2="1" y2="0"><stop offset="0" stop-color="#5aa6ee"/><stop offset="0.5" stop-color="#8ccaf8"/><stop offset="1" stop-color="#4a92dc"/></linearGradient></defs>
<rect x="7" y="3.5" width="7" height="9" fill="url(#tg)"/>
<rect x="6" y="0.5" width="9" height="3.3" rx="1.2" fill="#c89a52"/>
<rect x="6" y="12.2" width="9" height="2.8" rx="1.2" fill="#c89a52"/>
<path d="M0.5 9.5 Q0.8 5.5 2.5 5.5 M4 5.5 Q5 7 5.8 9 Q6.5 10.5 8 10 L13 5" fill="none" stroke="#3f9cf0" stroke-width="1.2" stroke-dasharray="1.2 0.8"/>
</g><g transform="translate(25,277)">
<path d="M0.5 1.5 Q0.5 0.5 1.5 0.5 H9.5 L13.5 4.5 V14.5 Q13.5 15.5 12.5 15.5 H1.5 Q0.5 15.5 0.5 14.5 Z" fill="#fff" stroke="#8a8a8a"/>
<path d="M9.5 0.5 V4.5 H13.5" fill="#f2f2f2" stroke="#a0a0a0"/>
<rect x="2" y="2" width="5" height="5" fill="#56708a"/>
<rect x="3" y="3.5" width="3" height="3" fill="#e08840"/>
<circle cx="4.5" cy="3.2" r="0.9" fill="#10202a"/>
<g fill="#8c8c8c" shape-rendering="crispEdges"><rect x="2" y="8" width="2" height="1"/><rect x="5" y="8" width="3" height="1"/><rect x="9" y="8" width="3" height="1"/><rect x="2" y="10" width="2" height="1"/><rect x="5" y="10" width="3" height="1"/><rect x="9" y="10" width="3" height="1"/><rect x="2" y="12" width="2" height="1"/><rect x="5" y="12" width="3" height="1"/><rect x="9" y="12" width="3" height="1"/></g></g><g transform="translate(24,295)">
<defs><linearGradient id="bg0" x1="0" y1="0" x2="0" y2="1"><stop offset="0" stop-color="#f4f8fd"/><stop offset="1" stop-color="#c9daf0"/></linearGradient></defs>
<path d="M2.5 0.5 H13 Q15.5 0.5 15.5 3 V10 Q15.5 12.5 13 12.5 H8 L6 15.5 L5.5 12.5 H3 Q0.5 12.5 0.5 10 V3 Q0.5 0.5 3 0.5 Z" fill="url(#bg0)" stroke="#8a8a8a"/><g fill="#1d4a64"><path d="M2.8 2.5 H5.2 L4.6 7.8 H3.4 Z"/><rect x="3.1" y="8.8" width="1.8" height="1.8" fill="#3a6a80"/>
<path d="M5.8 2.5 H8.2 L7.6 7.8 H6.4 Z"/><rect x="6.1" y="8.8" width="1.8" height="1.8" fill="#3a6a80"/></g>
<path d="M9.3 4 Q9.5 2.2 11.3 2.2 Q13.3 2.2 13.3 4 Q13.3 5.5 11.8 6 V7.5" fill="none" stroke="#1d4a64" stroke-width="1.7"/>
<rect x="10.8" y="8.5" width="2" height="2" fill="#1d4a64"/></g><g transform="translate(43,313)">
<defs><linearGradient id="bg0" x1="0" y1="0" x2="0" y2="1"><stop offset="0" stop-color="#f4f8fd"/><stop offset="1" stop-color="#c9daf0"/></linearGradient></defs>
<path d="M2.5 0.5 H13 Q15.5 0.5 15.5 3 V10 Q15.5 12.5 13 12.5 H8 L6 15.5 L5.5 12.5 H3 Q0.5 12.5 0.5 10 V3 Q0.5 0.5 3 0.5 Z" fill="url(#bg0)" stroke="#8a8a8a"/><g fill="#1d4a64"><path d="M2.8 2.5 H5.2 L4.6 7.8 H3.4 Z"/><rect x="3.1" y="8.8" width="1.8" height="1.8" fill="#3a6a80"/>
<path d="M5.8 2.5 H8.2 L7.6 7.8 H6.4 Z"/><rect x="6.1" y="8.8" width="1.8" height="1.8" fill="#3a6a80"/></g>
<path d="M9.3 4 Q9.5 2.2 11.3 2.2 Q13.3 2.2 13.3 4 Q13.3 5.5 11.8 6 V7.5" fill="none" stroke="#1d4a64" stroke-width="1.7"/>
<rect x="10.8" y="8.5" width="2" height="2" fill="#1d4a64"/></g><g transform="translate(43,331)">
<defs><linearGradient id="bg0" x1="0" y1="0" x2="0" y2="1"><stop offset="0" stop-color="#f4f8fd"/><stop offset="1" stop-color="#c9daf0"/></linearGradient></defs>
<path d="M2.5 0.5 H13 Q15.5 0.5 15.5 3 V10 Q15.5 12.5 13 12.5 H8 L6 15.5 L5.5 12.5 H3 Q0.5 12.5 0.5 10 V3 Q0.5 0.5 3 0.5 Z" fill="url(#bg0)" stroke="#8a8a8a"/><g fill="#1d4a64"><path d="M2.8 2.5 H5.2 L4.6 7.8 H3.4 Z"/><rect x="3.1" y="8.8" width="1.8" height="1.8" fill="#3a6a80"/>
<path d="M5.8 2.5 H8.2 L7.6 7.8 H6.4 Z"/><rect x="6.1" y="8.8" width="1.8" height="1.8" fill="#3a6a80"/></g>
<path d="M9.3 4 Q9.5 2.2 11.3 2.2 Q13.3 2.2 13.3 4 Q13.3 5.5 11.8 6 V7.5" fill="none" stroke="#1d4a64" stroke-width="1.7"/>
<rect x="10.8" y="8.5" width="2" height="2" fill="#1d4a64"/></g><g transform="translate(43,348.5)">
<defs><radialGradient id="ug" cx="0.35" cy="0.4" r="0.7"><stop offset="0" stop-color="#c8ecff"/><stop offset="0.6" stop-color="#3aa0ee"/><stop offset="1" stop-color="#1466c8"/></radialGradient></defs>
<circle cx="7.2" cy="7.8" r="6.8" fill="url(#ug)"/>
<path d="M4.5 3 Q8 1.5 10.5 3 Q11.5 5 9.5 6.5 Q9 9 7 9.5 Q5.5 8 6 6 Q4.5 5 4.5 3 Z" fill="#8ad41e"/>
<path d="M11.5 6 Q13 7 12.8 9" stroke="#8ad41e" stroke-width="1.2" fill="none"/>
<path d="M1.5 9 Q2.5 10 2 11" stroke="#88d21c" stroke-width="1.2" fill="none"/>
<rect x="2.5" y="9.5" width="6.5" height="5" rx="2.2" fill="#f4f4f4" stroke="#4a4a4a" stroke-width="1.3"/>
<rect x="8.5" y="9.5" width="6.5" height="5" rx="2.2" fill="#f4f4f4" stroke="#4a4a4a" stroke-width="1.3"/>
<rect x="6" y="11.3" width="5.5" height="1.4" fill="#888"/>
</g><g transform="translate(44,368)"><path d="M0.5 5 L3 2.5 H11.5 V11 L9 14.5 H0.5 Z" fill="#d4d4d4"/><rect x="0.8" y="5.2" width="2.2" height="2.2" fill="#5a5a5a"/><rect x="0.8" y="8.2" width="2.2" height="2.2" fill="#5a5a5a"/><rect x="0.8" y="11.2" width="2.2" height="2.2" fill="#5a5a5a"/><rect x="3.8" y="5.2" width="2.2" height="2.2" fill="#5a5a5a"/><rect x="3.8" y="8.2" width="2.2" height="2.2" fill="#5a5a5a"/><rect x="3.8" y="11.2" width="2.2" height="2.2" fill="#5a5a5a"/><rect x="6.8" y="5.2" width="2.2" height="2.2" fill="#5a5a5a"/><rect x="6.8" y="8.2" width="2.2" height="2.2" fill="#5a5a5a"/><rect x="6.8" y="11.2" width="2.2" height="2.2" fill="#5a5a5a"/><rect x="2.6" y="3" width="2" height="1.6" fill="#7a7a7a"/><rect x="5.6" y="3" width="2" height="1.6" fill="#7a7a7a"/><rect x="8.6" y="3" width="2" height="1.6" fill="#7a7a7a"/><rect x="9.8" y="4.6" width="1.6" height="2" fill="#6e6e6e"/><rect x="9.8" y="7.6" width="1.6" height="2" fill="#6e6e6e"/><rect x="9.8" y="10.6" width="1.6" height="2" fill="#6e6e6e"/><path d="M9.5 -0.19999999999999996 L11.0 1.3 L9.5 2.8 L8.0 1.3 Z" fill="#555"/><path d="M13 1.1 L14.5 2.6 L13 4.1 L11.5 2.6 Z" fill="#555"/><path d="M12.5 5.5 L14.0 7 L12.5 8.5 L11.0 7 Z" fill="#555"/></g><g transform="translate(43,385)">
<defs><linearGradient id="bg1" x1="0" y1="0" x2="0" y2="1"><stop offset="0" stop-color="#f4f8fd"/><stop offset="1" stop-color="#c9daf0"/></linearGradient></defs>
<path d="M2.5 0.5 H13 Q15.5 0.5 15.5 3 V10 Q15.5 12.5 13 12.5 H8 L6 15.5 L5.5 12.5 H3 Q0.5 12.5 0.5 10 V3 Q0.5 0.5 3 0.5 Z" fill="url(#bg1)" stroke="#8a8a8a"/><path d="M8.3 2 H10.6 L8.6 8.5 H7.3 Z" fill="#e80e0e"/><circle cx="7.6" cy="10.3" r="1.1" fill="#e80e0e"/></g><rect x="283.5" y="103.5" width="718" height="18" fill="none" stroke="#000" stroke-dasharray="1 1" stroke-dashoffset="1" shape-rendering="crispEdges"/><rect x="1006" y="78" width="16" height="230" fill="#f0f0f0" shape-rendering="crispEdges"/><rect x="1006" y="95" width="15" height="176" fill="#cdcdcd" shape-rendering="crispEdges"/><path d="M1010 89.5 L1013.5 85 L1017 89.5" fill="none" stroke="#505050" stroke-width="2"/><path d="M1010 297 L1013.5 301.5 L1017 297" fill="none" stroke="#505050" stroke-width="2"/><g transform="translate(480,511)">
<rect x="0" y="0" width="15" height="15" rx="1" fill="#3aa83c"/>
<rect x="1" y="1" width="13" height="13" fill="#43b544"/><rect x="4" y="2.5" width="1" height="2" fill="#e8d68a"/><rect x="4" y="10.5" width="1" height="2" fill="#e8d68a"/><rect x="2.5" y="4" width="2" height="1" fill="#e8d68a"/><rect x="10.5" y="4" width="2" height="1" fill="#e8d68a"/><rect x="6" y="2.5" width="1" height="2" fill="#e8d68a"/><rect x="6" y="10.5" width="1" height="2" fill="#e8d68a"/><rect x="2.5" y="6" width="2" height="1" fill="#e8d68a"/><rect x="10.5" y="6" width="2" height="1" fill="#e8d68a"/><rect x="8" y="2.5" width="1" height="2" fill="#e8d68a"/><rect x="8" y="10.5" width="1" height="2" fill="#e8d68a"/><rect x="2.5" y="8" width="2" height="1" fill="#e8d68a"/><rect x="10.5" y="8" width="2" height="1" fill="#e8d68a"/><rect x="10" y="2.5" width="1" height="2" fill="#e8d68a"/><rect x="10" y="10.5" width="1" height="2" fill="#e8d68a"/><rect x="2.5" y="10" width="2" height="1" fill="#e8d68a"/><rect x="10.5" y="10" width="2" height="1" fill="#e8d68a"/><rect x="4" y="4" width="7" height="7" fill="#3c3c3c" stroke="#1a1a1a" stroke-width="0.6"/><circle cx="2" cy="2" r="0.7" fill="#eedd88"/><circle cx="13" cy="2" r="0.7" fill="#eedd88"/><circle cx="2" cy="13" r="0.7" fill="#eedd88"/><circle cx="13" cy="13" r="0.7" fill="#eedd88"/></g><rect x="1019" y="520" width="2" height="2" fill="#a8a8a8" shape-rendering="crispEdges"/><rect x="1016" y="523" width="2" height="2" fill="#a8a8a8" shape-rendering="crispEdges"/><rect x="1019" y="523" width="2" height="2" fill="#a8a8a8" shape-rendering="crispEdges"/><rect x="1013" y="526" width="2" height="2" fill="#a8a8a8" shape-rendering="crispEdges"/><rect x="1016" y="526" width="2" height="2" fill="#a8a8a8" shape-rendering="crispEdges"/><rect x="1019" y="526" width="2" height="2" fill="#a8a8a8" shape-rendering="crispEdges"/></svg>
</body></html>
